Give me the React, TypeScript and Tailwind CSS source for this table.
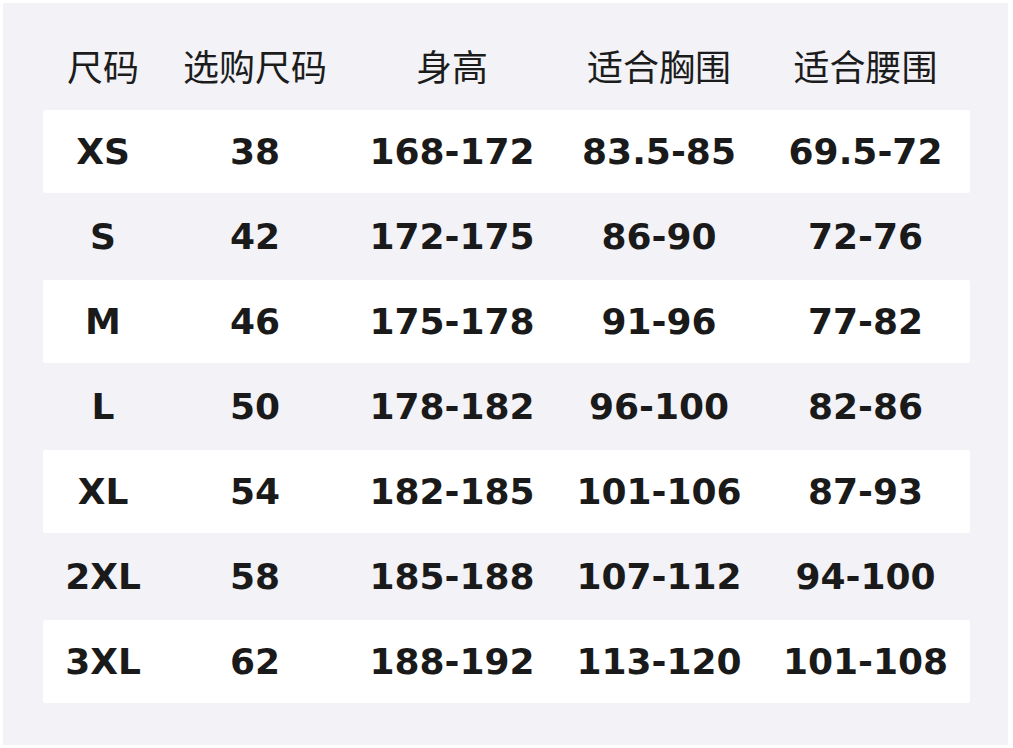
import React from "react";

const headers = ["尺码", "选购尺码", "身高", "适合胸围", "适合腰围"];
const rows = [
  ["XS", "38", "168-172", "83.5-85", "69.5-72"],
  ["S", "42", "172-175", "86-90", "72-76"],
  ["M", "46", "175-178", "91-96", "77-82"],
  ["L", "50", "178-182", "96-100", "82-86"],
  ["XL", "54", "182-185", "101-106", "87-93"],
  ["2XL", "58", "185-188", "107-112", "94-100"],
  ["3XL", "62", "188-192", "113-120", "101-108"],
];

const cols = "grid grid-cols-[120px_184px_210px_204px_209px]";

export default function App() {
  return (
    <div className="w-[1013px] h-[748px] bg-white p-[3px] pr-[5px]">
      <div className="w-full h-[742px] bg-[#f2f2f7] pl-[40px] pr-[38px] pt-[22px]">
        <div className={`${cols} h-[85px] pb-[6px] items-center text-[#1c1c1c] text-[36px] leading-none`} style={{ fontFamily: '"Noto Sans CJK SC", "Noto Sans", sans-serif' }}>
          {headers.map((h) => (
            <div key={h} className="text-center">{h}</div>
          ))}
        </div>
        {rows.map((r, i) => (
          <div
            key={r[0]}
            className={`${cols} h-[83px] mb-[2px] items-center text-[#1a1a1a] text-[36px] font-bold leading-none ${i % 2 === 0 ? "bg-white rounded-[2px]" : ""}`}
            style={{ fontFamily: '"DejaVu Sans", sans-serif' }}
          >
            {r.map((c, j) => (
              <div key={j} className="text-center">{c}</div>
            ))}
          </div>
        ))}
      </div>
    </div>
  );
}
